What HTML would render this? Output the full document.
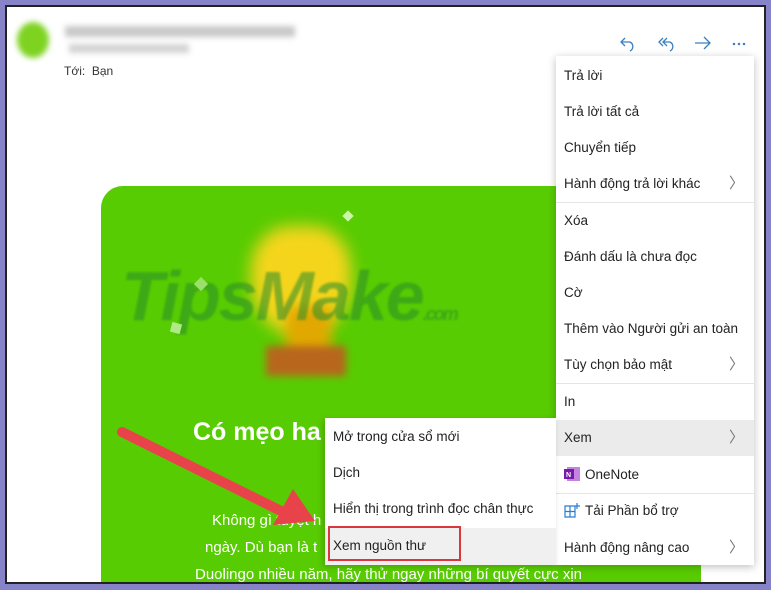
<!DOCTYPE html>
<html><head><meta charset="utf-8"><style>
*{margin:0;padding:0;box-sizing:border-box}
body{width:771px;height:590px;background:#8683c8;position:relative;overflow:hidden;font-family:"Liberation Sans","DejaVu Sans",sans-serif}
#win{position:absolute;left:5px;top:5px;width:761px;height:579px;background:#fff;border:2px solid #222;overflow:hidden}
.abs{position:absolute}
.menu{position:absolute;background:#fff;box-shadow:0 2px 8px rgba(0,0,0,.25)}
.it{position:absolute;left:0;right:0;height:36px;line-height:36px;font-size:13.5px;color:#222;padding-left:8px;white-space:nowrap}
.chev{position:absolute;right:10px;top:0;color:#777;font-size:15px}
.sep{position:absolute;left:0;right:0;height:1px;background:#e4e4e4}
.card{position:absolute;left:94px;top:179px;width:600px;height:420px;background:#58cc02;border-radius:22px 0 0 0}
.ct{position:absolute;color:#fff;font-size:15px;white-space:nowrap}
</style></head><body>
<div id="win">
 <div class="abs" style="left:10px;top:15px;width:32px;height:36px;border-radius:50%;background:#7ed321;filter:blur(3px)"></div>
 <div class="abs" style="left:58px;top:19px;width:230px;height:11px;background:#c8c8c8;filter:blur(3px)"></div>
 <div class="abs" style="left:62px;top:37px;width:120px;height:9px;background:#d2d2d2;filter:blur(3px)"></div>
 <div class="abs" style="left:57px;top:57px;font-size:12px;color:#333">Tới:&nbsp; Bạn</div>
 <svg class="abs" style="left:612px;top:27px" width="140" height="20" viewBox="0 0 140 20" fill="none" stroke="#3a7fc1" stroke-width="1.3">
  <path d="M6 4 L2 8 L6 12 M2 8 H11 A5 5 0 0 1 11 17"/>
  <path d="M44 4 L40 8 L44 12 M48 4 L44 8 L48 12 M44 8 H51 A5 5 0 0 1 51 17"/>
  <path d="M76 9 H91 M85 3 L91 9 L85 15"/>
  <circle cx="115" cy="10" r=".6" fill="#3a7fc1"/><circle cx="120" cy="10" r=".6" fill="#3a7fc1"/><circle cx="125" cy="10" r=".6" fill="#3a7fc1"/>
 </svg>
 <div class="card">
  <div class="abs" style="left:150px;top:40px;width:100px;height:110px;background:#f5d51c;border-radius:40% 40% 50% 50%;filter:blur(8px)"></div>
  <div class="abs" style="left:185px;top:120px;width:45px;height:60px;background:#e0a800;filter:blur(6px)"></div>
  <div class="abs" style="left:165px;top:160px;width:80px;height:30px;background:#b8661c;filter:blur(4px)"></div>
  <div class="abs" style="left:20px;top:70px;font-size:70px;font-weight:bold;font-style:italic;color:rgba(40,140,40,.55);letter-spacing:-2px;white-space:nowrap;filter:blur(1px)">TipsMake<span style="font-size:18px">.com</span></div>
  <div class="abs" style="left:243px;top:26px;width:8px;height:8px;background:#cdf5a8;transform:rotate(45deg)"></div>
  <div class="abs" style="left:70px;top:137px;width:10px;height:10px;background:#b0ea85;transform:rotate(15deg)"></div>
  <div class="abs" style="left:95px;top:93px;width:10px;height:10px;background:#9be06a;transform:rotate(45deg)"></div>
  <div class="ct" style="top:232px;font-size:25px;font-weight:bold;left:92px">Có mẹo ha</div>
  <div class="ct" style="top:326px;left:111px">Không gì tuyệt h</div>
  <div class="ct" style="top:353px;left:104px">ngày. Dù bạn là t</div>
  <div class="ct" style="top:380px;left:94px">Duolingo nhiều năm, hãy thử ngay những bí quyết cực xịn</div>
 </div>
 <div class="menu" style="left:549px;top:49px;width:198px;height:509px">
  <div class="it" style="top:2px">Trả lời</div>
  <div class="it" style="top:38px">Trả lời tất cả</div>
  <div class="it" style="top:74px">Chuyển tiếp</div>
  <div class="it" style="top:110px">Hành động trả lời khác<span class="chev">〉</span></div>
  <div class="sep" style="top:146px"></div>
  <div class="it" style="top:147px">Xóa</div>
  <div class="it" style="top:183px">Đánh dấu là chưa đọc</div>
  <div class="it" style="top:219px">Cờ</div>
  <div class="it" style="top:255px">Thêm vào Người gửi an toàn</div>
  <div class="it" style="top:291px">Tùy chọn bảo mật<span class="chev">〉</span></div>
  <div class="sep" style="top:327px"></div>
  <div class="it" style="top:328px">In</div>
  <div class="it" style="top:364px;background:#ebebeb">Xem<span class="chev">〉</span></div>
  <div class="it" style="top:401px"><svg width="16" height="14" style="vertical-align:-2px;margin-right:5px"><rect x="3" y="0" width="13" height="14" fill="#c583e0"/><rect x="0" y="2" width="10" height="10" fill="#7719aa"/><text x="2" y="10" font-size="7" fill="#fff" font-family="Liberation Sans" font-weight="bold">N</text></svg>OneNote</div>
  <div class="sep" style="top:437px"></div>
  <div class="it" style="top:437px"><svg width="16" height="16" style="vertical-align:-3px;margin-right:5px" fill="none" stroke="#2b7cd3" stroke-width="1.2"><path d="M1 4 H11 V15 H1 Z M6 4 V15 M1 9.5 H11 M13 1 V7 M10 4 H16"/></svg>Tải Phần bổ trợ</div>
  <div class="it" style="top:474px">Hành động nâng cao<span class="chev">〉</span></div>
 </div>
 <div class="menu" style="left:318px;top:411px;width:231px;height:147px;box-shadow:-2px 2px 6px rgba(0,0,0,.2)">
  <div class="it" style="top:1px">Mở trong cửa sổ mới</div>
  <div class="it" style="top:37px">Dịch</div>
  <div class="it" style="top:73px">Hiển thị trong trình đọc chân thực</div>
  <div class="it" style="top:110px;background:#f0f0f0;height:37px">Xem nguồn thư</div>
  <div class="abs" style="left:3px;top:108px;width:133px;height:35px;border:2px solid #d9363e"></div>
 </div>
 <svg class="abs" style="left:0;top:0" width="761" height="579">
  <line x1="115" y1="425" x2="278" y2="506" stroke="#e8434a" stroke-width="10" stroke-linecap="round"/>
  <polygon points="308,514 266,518 286,482" fill="#e8434a"/>
 </svg>
</div>
</body></html>
